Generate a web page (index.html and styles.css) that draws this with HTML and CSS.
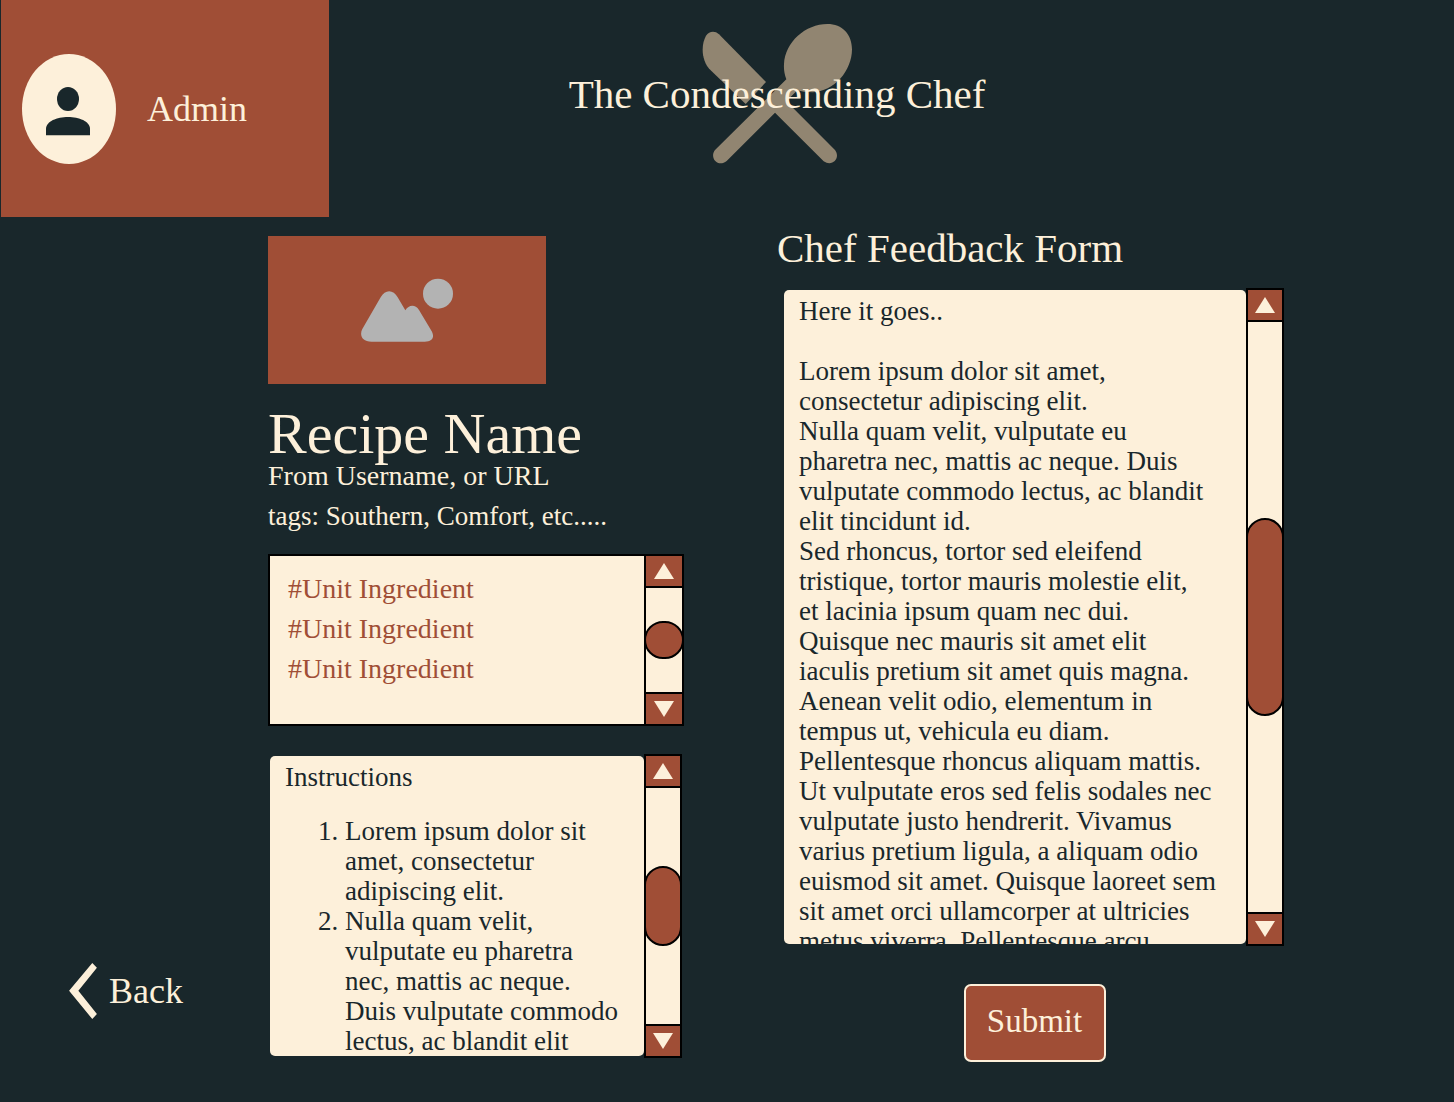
FILE: index.html
```html
<!DOCTYPE html>
<html lang="en">
<head>
<meta charset="utf-8">
<meta name="viewport" content="width=device-width, initial-scale=1">
<title>The Condescending Chef</title>
<link rel="stylesheet" href="styles.css">
</head>
<body>
<header class="top">
  <a class="profile" href="#">
    <svg class="avatar" viewBox="66 162 282 330" aria-hidden="true">
      <ellipse class="avatar-disc" cx="207" cy="327" rx="141" ry="165"/>
      <ellipse cx="204" cy="297" rx="33" ry="36"/>
      <path d="M138 406V387C138 364 171 351 204 351S270 364 270 387V406Z"/>
    </svg>
    <span>Admin</span>
  </a>
  <div class="brand">
    <svg class="utensils" viewBox="459 42 453 420" aria-hidden="true">
      <path d="M595 277L651 216L510 73C497 61 480 64 471 77C455 106 457 153 485 181L590 282Z"/>
      <path d="M712 208C706 192 704 178 705 162C708 96 770 42 835 42C880 42 909 73 909 118C909 182 856 245 790 247C772 247 757 245 745 241L712 274L858 420C876 444 850 472 824 454L678 308L533 453C508 474 480 444 498 420Z"/>
    </svg>
    <h1 class="brand-name">The Condescending Chef</h1>
  </div>
</header>

<main class="content">
  <a class="back" href="#">
    <svg class="chevron" viewBox="57 38 84 169" aria-hidden="true"><path d="M127 38L141 52L85 122L141 192L127 207L57 122Z"/></svg>
    <span>Back</span>
  </a>

  <section class="recipe">
    <div class="photo">
      <svg class="photo-icon" viewBox="303 144 276 192" role="img" aria-label="Recipe photo">
        <circle cx="534" cy="191" r="45"/>
        <path d="M335 335C305 335 298 314 307 297L362 202C375 178 400 178 413 202L436 241C447 223 466 223 477 240L516 305C524 322 517 335 494 335Z"/>
      </svg>
    </div>
    <h2 class="recipe-name">Recipe Name</h2>
    <p class="meta">From Username, or URL</p>
    <p class="meta meta-tags">tags: Southern, Comfort, etc.....</p>

    <div class="pane pane-ingredients">
      <ul class="ingredients">
        <li>#Unit Ingredient</li>
        <li>#Unit Ingredient</li>
        <li>#Unit Ingredient</li>
      </ul>
      <div class="scroller">
        <button class="step" type="button" aria-label="Scroll ingredients up"><svg class="arrow" viewBox="0 0 20 16"><path d="M10 0L20 16H0Z"/></svg></button>
        <div class="track"><div class="thumb"></div></div>
        <button class="step" type="button" aria-label="Scroll ingredients down"><svg class="arrow" viewBox="0 0 20 16"><path d="M0 0H20L10 16Z"/></svg></button>
      </div>
    </div>

    <div class="pane pane-instructions">
      <div class="sheet">
        <h3 class="sheet-title">Instructions</h3>
        <ol class="steps">
          <li>Lorem ipsum dolor sit<br>amet, consectetur<br>adipiscing elit.</li>
          <li>Nulla quam velit,<br>vulputate eu pharetra<br>nec, mattis ac neque.<br>Duis vulputate commodo<br>lectus, ac blandit elit</li>
        </ol>
      </div>
      <div class="scroller">
        <button class="step" type="button" aria-label="Scroll instructions up"><svg class="arrow" viewBox="0 0 20 16"><path d="M10 0L20 16H0Z"/></svg></button>
        <div class="track"><div class="thumb thumb-medium"></div></div>
        <button class="step" type="button" aria-label="Scroll instructions down"><svg class="arrow" viewBox="0 0 20 16"><path d="M0 0H20L10 16Z"/></svg></button>
      </div>
    </div>
  </section>

  <form class="feedback">
    <label class="feedback-title" for="feedback-text">Chef Feedback Form</label>
    <div class="pane pane-feedback">
      <textarea class="sheet feedback-text" id="feedback-text">Here it goes..

Lorem ipsum dolor sit amet,
consectetur adipiscing elit.
Nulla quam velit, vulputate eu
pharetra nec, mattis ac neque. Duis
vulputate commodo lectus, ac blandit
elit tincidunt id.
Sed rhoncus, tortor sed eleifend
tristique, tortor mauris molestie elit,
et lacinia ipsum quam nec dui.
Quisque nec mauris sit amet elit
iaculis pretium sit amet quis magna.
Aenean velit odio, elementum in
tempus ut, vehicula eu diam.
Pellentesque rhoncus aliquam mattis.
Ut vulputate eros sed felis sodales nec
vulputate justo hendrerit. Vivamus
varius pretium ligula, a aliquam odio
euismod sit amet. Quisque laoreet sem
sit amet orci ullamcorper at ultricies
metus viverra. Pellentesque arcu</textarea>
      <div class="scroller">
        <button class="step" type="button" aria-label="Scroll feedback up"><svg class="arrow" viewBox="0 0 20 16"><path d="M10 0L20 16H0Z"/></svg></button>
        <div class="track"><div class="thumb thumb-long"></div></div>
        <button class="step" type="button" aria-label="Scroll feedback down"><svg class="arrow" viewBox="0 0 20 16"><path d="M0 0H20L10 16Z"/></svg></button>
      </div>
    </div>
    <button class="submit" type="submit">Submit</button>
  </form>
</main>
</body>
</html>
```
FILE: styles.css
```css
:root {
  --ink: #19272b;
  --cream: #fdf0da;
  --rust: #a04e36;
}

* {
  box-sizing: border-box;
}

body {
  margin: 0;
  min-height: 100vh;
  background: var(--ink);
  color: var(--cream);
  font-family: "Liberation Serif", "Times New Roman", serif;
  font-size: 28px;
}

h1, h2, h3, p, ul, ol {
  margin: 0;
  padding: 0;
  font-weight: 400;
}

a {
  color: inherit;
  text-decoration: none;
}

svg {
  display: block;
  flex: none;
}

/* Header */
.top {
  display: grid;
  grid-template-columns: 329px minmax(0, 896fr) minmax(0, 229fr);
  height: 218px;
}

.profile {
  display: flex;
  align-items: center;
  gap: 31px;
  margin: 0 0 1px 1px;
  padding-left: 21px;
  background: var(--rust);
  font-size: 36px;
}

.avatar {
  width: 94px;
  height: 110px;
  fill: var(--ink);
}

.avatar-disc {
  fill: var(--cream);
}

.brand {
  display: grid;
  place-items: center;
  align-self: start;
  padding-top: 24px;
}

.brand > * {
  grid-area: 1 / 1;
}

.utensils {
  width: 151px;
  height: 140px;
  fill: #918571;
}

.brand-name {
  z-index: 1;
  font-size: 41px;
  white-space: nowrap;
}

/* Page body */
.content {
  display: grid;
  grid-template-columns: minmax(190px, 268fr) minmax(0, 416fr) 93fr minmax(0, 507fr) 170fr;
  padding-bottom: 40px;
}

.back {
  display: flex;
  align-items: center;
  align-self: end;
  gap: 12px;
  padding: 0 0 43px 69px;
  font-size: 36px;
}

.chevron {
  width: 28px;
  height: 56px;
  fill: var(--cream);
}

/* Recipe column */
.recipe {
  padding-top: 18px;
}

.photo {
  display: grid;
  place-items: center;
  width: 278px;
  height: 148px;
  margin-bottom: 26px;
  background: var(--rust);
}

.photo-icon {
  width: 92px;
  height: 64px;
  fill: #b3b3b3;
}

.recipe-name {
  font-size: 58px;
  line-height: 48px;
}

.meta {
  line-height: 36px;
}

.meta-tags {
  margin-top: 4px;
  font-size: 27px;
}

/* Scrolling panes */
.pane {
  display: flex;
}

.pane-ingredients {
  height: 172px;
  margin-top: 20px;
}

.pane-instructions {
  height: 304px;
  margin-top: 28px;
  padding: 0 2px;
}

.pane-feedback {
  height: 658px;
  margin-left: 7px;
}

.ingredients {
  flex: 1;
  padding: 13px 18px;
  border: 2px solid #000;
  border-right: 0;
  background: var(--cream);
  color: var(--rust);
  line-height: 40px;
  list-style: none;
}

.sheet {
  flex: 1;
  min-width: 0;
  margin: 2px 0;
  padding: 6px 0 0 15px;
  overflow: hidden;
  border-radius: 5px;
  background: var(--cream);
  color: var(--ink);
  font-size: 27px;
  line-height: 30px;
}

.sheet-title {
  margin-bottom: 24px;
  font-size: 27px;
}

.steps {
  padding-left: 60px;
}

.feedback-text {
  display: block;
  border: 0;
  font-family: inherit;
  resize: none;
}

.scroller {
  display: flex;
  flex: none;
  flex-direction: column;
  width: 38px;
  border: 2px solid #000;
  background: var(--cream);
}

.pane-ingredients .scroller {
  width: 40px;
}

.step {
  display: grid;
  flex: none;
  place-items: center;
  height: 30px;
  padding: 0;
  border: 0;
  background: var(--rust);
}

.arrow {
  width: 20px;
  height: 16px;
  fill: var(--cream);
}

.track {
  display: flex;
  flex: 1;
  flex-direction: column;
  justify-content: center;
  border: solid #000;
  border-width: 2px 0;
}

.thumb {
  height: 38px;
  margin: 0 -2px;
  border: 2px solid #000;
  border-radius: 20px;
  background: var(--rust);
}

.thumb-medium {
  height: 80px;
}

.thumb-long {
  height: 198px;
}

/* Feedback column */
.feedback {
  display: flex;
  flex-direction: column;
  grid-column: 4;
}

.feedback-title {
  margin-bottom: 10px;
  font-size: 41px;
  line-height: 60px;
}

.submit {
  align-self: center;
  width: 142px;
  height: 78px;
  margin: 38px 0 0 8px;
  padding: 0 0 4px;
  border: 2px solid var(--cream);
  border-radius: 7px;
  background: var(--rust);
  color: var(--cream);
  font-family: inherit;
  font-size: 33px;
}
```
